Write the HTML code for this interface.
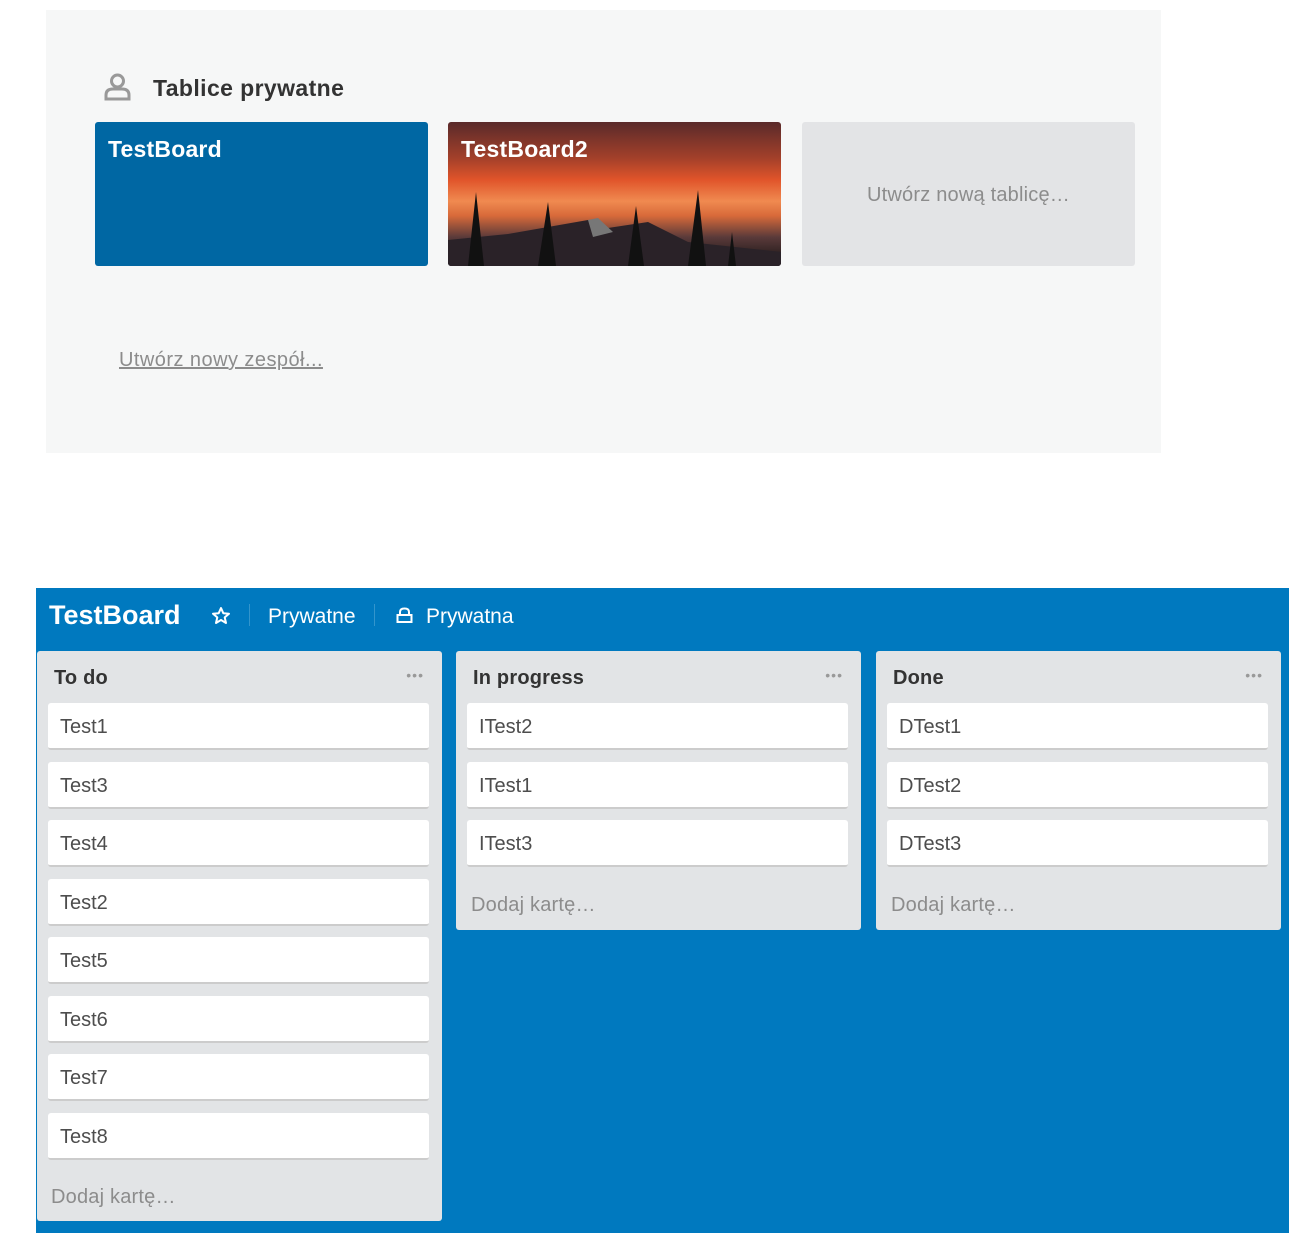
<!DOCTYPE html>
<html><head><meta charset="utf-8"><style>
*{margin:0;padding:0;box-sizing:border-box}
body{width:1314px;height:1258px;background:#fff;font-family:"Liberation Sans",sans-serif;position:relative;overflow:hidden}
.a{position:absolute}
.panel{left:46px;top:10px;width:1115px;height:443px;background:#f6f7f7}
.tile{top:122px;height:144px;width:333px;border-radius:3px}
.tile b{position:absolute;left:13px;top:14px;color:#fff;font-size:23px;letter-spacing:.2px}
.board{left:36px;top:588px;width:1253px;height:645px;background:#0079bf}
.list{top:651px;width:405px;background:#e2e4e6;border-radius:3px}
.list h3{position:absolute;left:17px;top:16px;font-size:20px;color:#333;letter-spacing:.2px}
.dots{position:absolute;right:18px;top:16px;color:#999;font-size:14px;letter-spacing:1px}
.card{position:absolute;left:11px;width:381px;height:47px;background:#fff;border-radius:3px;border-bottom:2px solid #ccc;font-size:20px;color:#4d4d4d;padding:13px 12px 0}
.add{position:absolute;left:15px;font-size:20px;color:#8c8c8c;letter-spacing:.2px}
</style></head><body>
<div class="a panel"></div>
<svg class="a" style="left:104px;top:73px" width="27" height="28" viewBox="0 0 27 28"><circle cx="13.5" cy="8" r="6" fill="none" stroke="#999" stroke-width="3"/><path d="M2 26 V22 Q2 16 9 16 H18 Q25 16 25 22 V26 Z" fill="none" stroke="#999" stroke-width="3"/></svg>
<div class="a" style="left:153px;top:75px;font-size:23px;font-weight:bold;color:#333;letter-spacing:.4px">Tablice prywatne</div>
<div class="a tile" style="left:95px;background:#0067a3"><b>TestBoard</b></div>
<div class="a tile" style="left:448px;overflow:hidden;background:linear-gradient(180deg,#5a2a2a 0%,#a3402a 25%,#e0542a 40%,#f08a50 55%,#d86a3a 65%,#5a3a3a 80%,#111 100%)">
<svg class="a" style="left:0;top:0" width="334" height="144" viewBox="0 0 334 144"><path d="M0 144 V118 L60 112 L140 98 L160 106 L200 100 L240 120 L334 130 V144Z" fill="#2a2228"/><path d="M140 98 L150 96 L165 110 L145 115Z" fill="#777"/><path d="M20 144 L28 70 L36 144Z M90 144 L100 80 L108 144Z M180 144 L188 84 L196 144Z M240 144 L250 68 L258 144Z M280 144 L284 110 L288 144Z" fill="#111"/></svg>
<b>TestBoard2</b></div>
<div class="a tile" style="left:802px;background:#e3e4e6"><span style="position:absolute;left:0;right:0;top:62px;text-align:center;color:#8c8c8c;font-size:20px;letter-spacing:.2px">Utwórz nową tablicę…</span></div>
<div class="a" style="left:119px;top:349px;font-size:20px;color:#8c8c8c;text-decoration:underline;letter-spacing:.45px">Utwórz nowy zespół...</div>

<div class="a board"></div>
<div class="a" style="left:49px;top:600px;font-size:27px;font-weight:bold;color:#fff">TestBoard</div>
<svg class="a" style="left:211px;top:606px" width="20" height="20" viewBox="0 0 20 20"><path d="M10 2 L12.3 7.2 L18 7.7 L13.7 11.4 L15 17 L10 14 L5 17 L6.3 11.4 L2 7.7 L7.7 7.2 Z" fill="none" stroke="#fff" stroke-width="2" stroke-linejoin="round"/></svg>
<div class="a" style="left:249px;top:604px;width:1px;height:22px;background:#3395cc"></div>
<div class="a" style="left:268px;top:605px;font-size:21px;color:#fff">Prywatne</div>
<div class="a" style="left:374px;top:604px;width:1px;height:22px;background:#3395cc"></div>
<svg class="a" style="left:396px;top:607px" width="17" height="17" viewBox="0 0 17 17"><path d="M4 8 V5 Q4 1.5 8.5 1.5 Q13 1.5 13 5 V8" fill="none" stroke="#fff" stroke-width="2"/><rect x="1.5" y="8" width="14" height="7" fill="none" stroke="#fff" stroke-width="2"/></svg>
<div class="a" style="left:426px;top:605px;font-size:21px;color:#fff">Prywatna</div>

<div class="a list" style="left:37px;height:570px"><h3>To do</h3><span class="dots">•••</span>
<div class="card" style="top:52px">Test1</div><div class="card" style="top:111px">Test3</div><div class="card" style="top:169px">Test4</div><div class="card" style="top:228px">Test2</div><div class="card" style="top:286px">Test5</div><div class="card" style="top:345px">Test6</div><div class="card" style="top:403px">Test7</div><div class="card" style="top:462px">Test8</div>
<div class="add" style="top:535px;left:14px">Dodaj kartę…</div></div>
<div class="a list" style="left:456px;height:279px"><h3>In progress</h3><span class="dots">•••</span>
<div class="card" style="top:52px">ITest2</div><div class="card" style="top:111px">ITest1</div><div class="card" style="top:169px">ITest3</div>
<div class="add" style="top:243px">Dodaj kartę…</div></div>
<div class="a list" style="left:876px;height:279px"><h3>Done</h3><span class="dots">•••</span>
<div class="card" style="top:52px">DTest1</div><div class="card" style="top:111px">DTest2</div><div class="card" style="top:169px">DTest3</div>
<div class="add" style="top:243px">Dodaj kartę…</div></div>
</body></html>
